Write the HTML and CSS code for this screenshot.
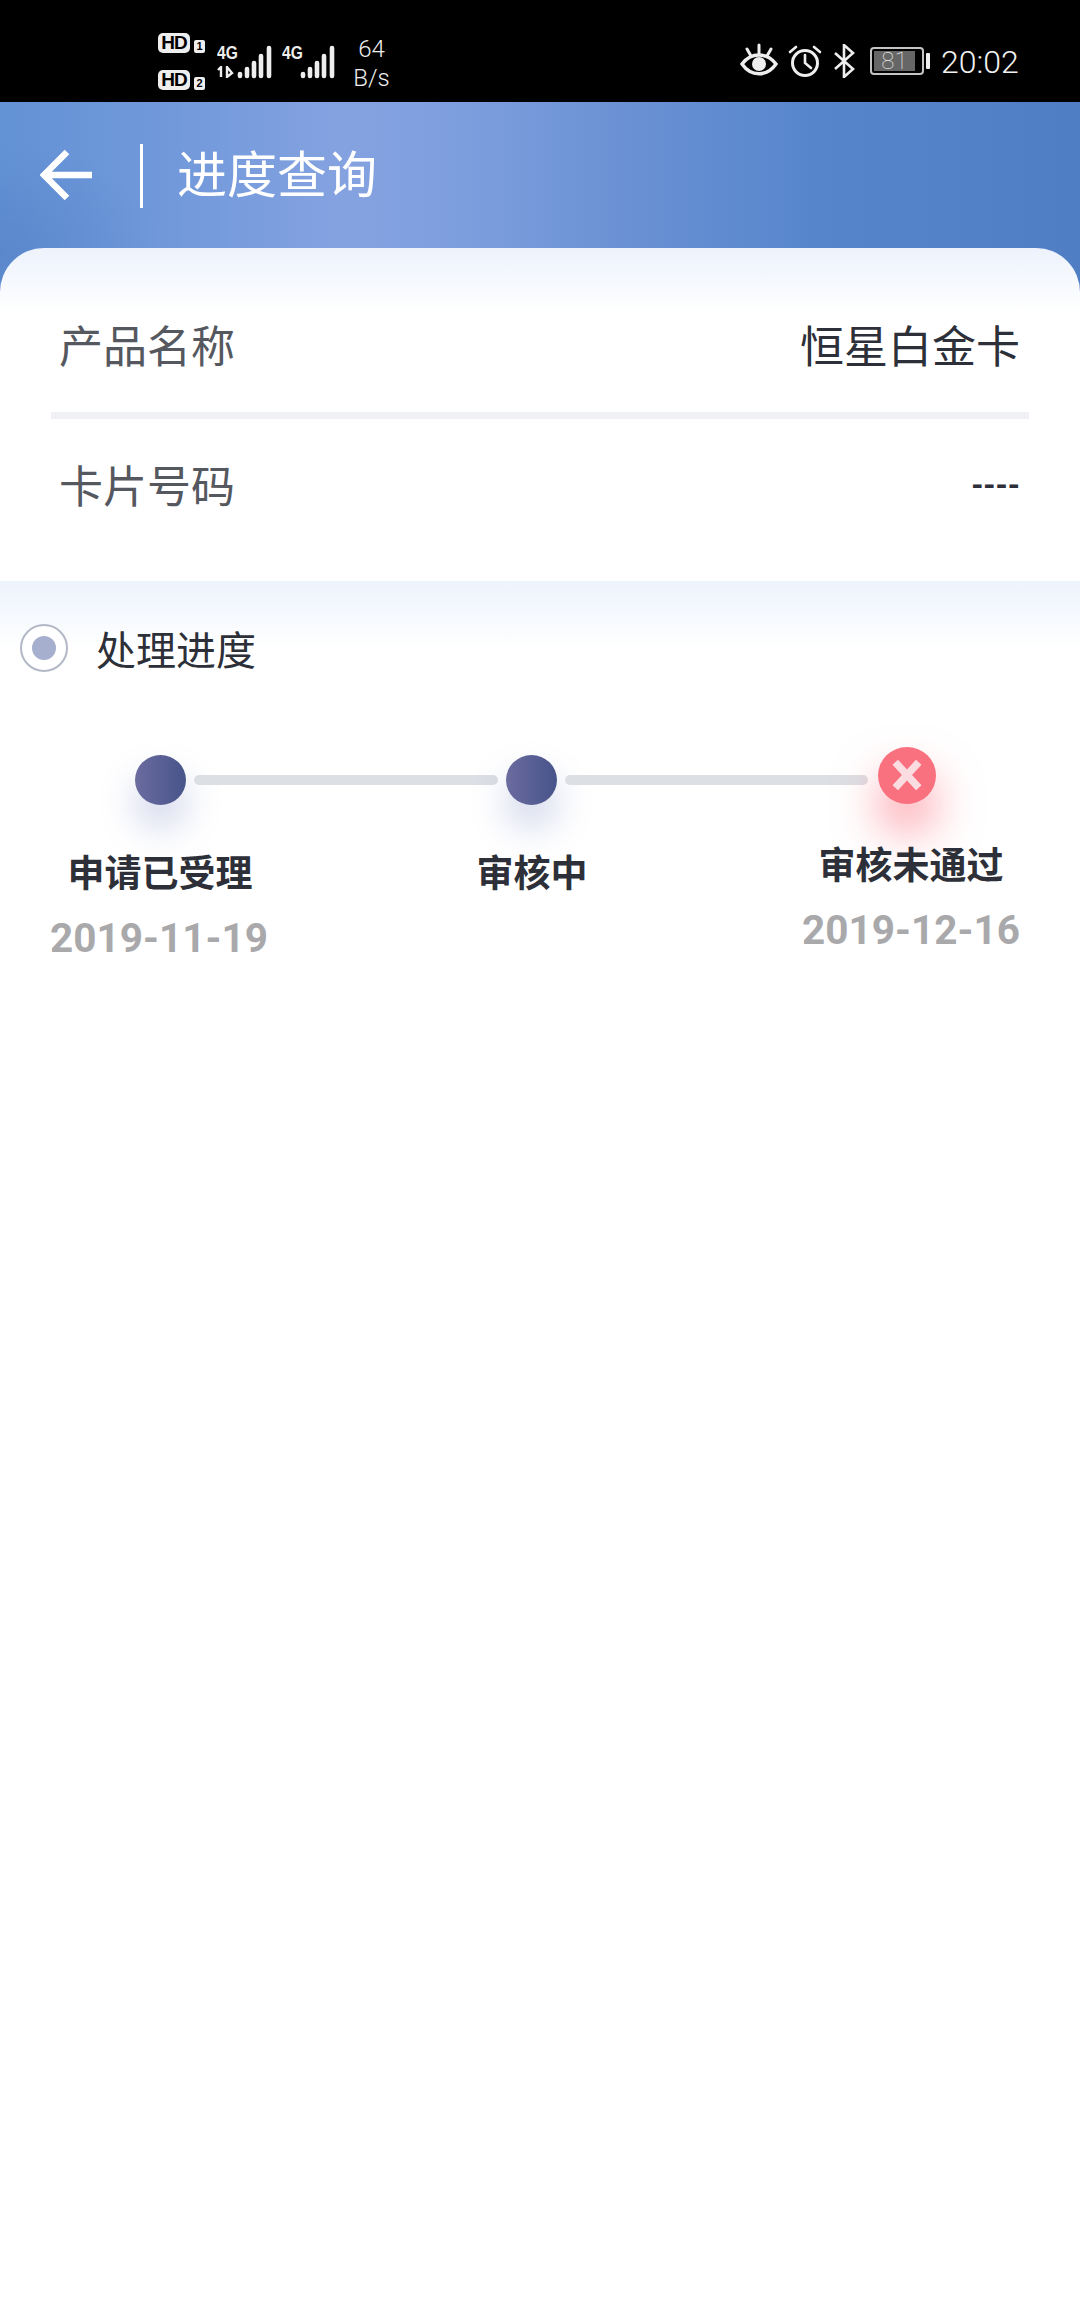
FILE: index.html
```html
<!DOCTYPE html>
<html lang="zh">
<head>
<meta charset="utf-8">
<title>进度查询</title>
<link rel="stylesheet" href="styles.css">
</head>
<body>
<div class="status">
  <div class="sims">
    <div class="sim"><span class="hd">HD</span><span class="simno">1</span></div>
    <div class="sim"><span class="hd">HD</span><span class="simno">2</span></div>
  </div>
  <div class="net net-a">
    <span class="g">4G</span>
    <svg class="arrows" width="17" height="12" viewBox="0 0 17 12"><path d="M4 11V1L1 4M10 1v10l5-4z" fill="none" stroke="#eee" stroke-width="2.4"/></svg>
    <svg class="bars" width="35" height="34" viewBox="0 0 35 34"><g stroke="#eee" stroke-width="4.6" stroke-linecap="round"><path d="M3 29v2M10 24v7M17 18v13M24 11v20M32 3v28"/></g></svg>
  </div>
  <div class="net net-b">
    <span class="g">4G</span>
    <svg class="bars" width="35" height="34" viewBox="0 0 35 34"><g stroke="#eee" stroke-width="4.6" stroke-linecap="round"><path d="M3 29v2M10 24v7M17 18v13M24 11v20M32 3v28"/></g></svg>
  </div>
  <div class="speed"><span>64</span><span>B/s</span></div>
  <div class="status-right">
    <svg class="eye" width="38" height="34" viewBox="0 0 38 34"><path d="M2 21c9-12 25-12 34 0-9 13-25 13-34 0z" fill="none" stroke="#eee" stroke-width="3.4"/><circle cx="19" cy="21" r="7" fill="#eee"/><path d="M19 2v8M7 6l4 7M31 6l-4 7" stroke="#eee" stroke-width="3" stroke-linecap="round"/></svg>
    <svg class="alarm" width="34" height="34" viewBox="0 0 34 34"><circle cx="17" cy="19" r="12.5" fill="none" stroke="#eee" stroke-width="3"/><path d="M17 11v8l6 5M2 8l6-5M32 8l-6-5" fill="none" stroke="#eee" stroke-width="2.6" stroke-linecap="round"/></svg>
    <svg class="bt" width="22" height="34" viewBox="0 0 22 34"><path d="M2 9l18 16-9 8V1l9 8L2 25" fill="none" stroke="#eee" stroke-width="2.6"/></svg>
    <div class="battery"><div class="cell"><div class="charge">81</div></div><i class="nub"></i></div>
    <span class="clock">20:02</span>
  </div>
</div>

<header class="topbar">
  <svg class="back" width="54" height="54" viewBox="0 0 54 54"><path d="M52 27H5M27 4L4 27l23 23" fill="none" stroke="#fff" stroke-width="6.5"/></svg>
  <i class="vline"></i>
  <h1 class="title">进度查询</h1>
</header>

<section class="card">
  <div class="row">
    <span class="label">产品名称</span>
    <span class="value">恒星白金卡</span>
  </div>
  <div class="row row-second">
    <span class="label">卡片号码</span>
    <span class="dashes">----</span>
  </div>
</section>

<section class="progress">
  <div class="heading">
    <span class="radio"><i></i></span>
    <h2>处理进度</h2>
  </div>
  <div class="track">
    <i class="dot"></i>
    <i class="line"></i>
    <i class="dot"></i>
    <i class="line"></i>
    <i class="dot dot-fail">
      <svg width="32" height="32" viewBox="0 0 30 30"><path d="M4 3l22 24M26 3L4 27" stroke="#fbdde1" stroke-width="7"/></svg>
    </i>
  </div>
  <div class="labels">
    <div class="step"><strong>申请已受理</strong><span>2019-11-19</span></div>
    <div class="step"><strong>审核中</strong></div>
    <div class="step step-fail"><strong>审核未通过</strong><span>2019-12-16</span></div>
  </div>
</section>
</body>
</html>
```

FILE: styles.css
```css
* { box-sizing: border-box; }
html, body { margin: 0; padding: 0; }
body {
  width: 1080px;
  height: 2310px;
  overflow: hidden;
  background: #fff;
  font-family: "Noto Sans CJK SC", Roboto, sans-serif;
  color: #2d3038;
}
h1, h2 { margin: 0; font-weight: 400; }
i { display: block; }

/* status bar */
.status {
  height: 102px;
  background: #000;
  color: #eee;
  display: flex;
  align-items: flex-start;
  padding: 0 60px 0 158px;
  font-family: Roboto, sans-serif;
}
.sims {
  width: 48px;
  margin-top: 33px;
  display: flex;
  flex-direction: column;
  gap: 17px;
}
.sim { display: flex; align-items: flex-end; gap: 4px; height: 20px; }
.hd {
  width: 32px;
  height: 20px;
  border-radius: 5px;
  background: #eee;
  color: #000;
  font: 700 19px/20px "Liberation Sans", sans-serif;
  text-align: center;
  letter-spacing: -1px;
}
.simno {
  width: 11px;
  height: 13px;
  border-radius: 2px;
  background: #eee;
  color: #000;
  font: 700 11px/13px "Liberation Sans", sans-serif;
  text-align: center;
}
.net { position: relative; height: 80px; }
.net-a { width: 65px; margin-left: 11px; }
.net-b { width: 53px; }
.g {
  position: absolute;
  left: 0;
  top: 43px;
  font: 700 19px/20px "Liberation Sans", sans-serif;
  transform: scaleX(.82);
  transform-origin: left;
}
.arrows { position: absolute; left: 0; top: 66px; }
.bars { position: absolute; left: 20px; top: 45px; }
.net-b .bars { left: 18px; }
.speed {
  width: 37px;
  margin: 35px 0 0 18px;
  display: flex;
  flex-direction: column;
  align-items: center;
  font-size: 24px;
  line-height: 29px;
  font-weight: 300;
}
.status-right {
  margin-left: auto;
  width: 280px;
  height: 102px;
  display: flex;
  align-items: flex-start;
  padding-top: 45px;
}
.eye { margin-left: 0; margin-top: -2px; }
.alarm { margin-left: 10px; margin-top: -1px; }
.bt { margin-left: 11px; margin-top: -1px; }
.battery { display: flex; align-items: center; margin-left: 15px; margin-top: 2px; }
.cell {
  width: 54px;
  height: 28px;
  border: 2px solid #c4c4c4;
  border-radius: 4px;
  padding: 2px;
}
.charge {
  width: 41px;
  height: 20px;
  background: #666;
  color: #e8e8e8;
  font: 100 24px/20px Roboto, sans-serif;
  text-align: center;
}
.nub { width: 4px; height: 16px; margin-left: 2px; background: #eee; border-radius: 1px; }
.clock {
  margin-left: 11px;
  margin-top: -2px;
  font-size: 32px;
  line-height: 38px;
  font-weight: 300;
  color: #f2f2f2;
}

/* title bar */
.topbar {
  height: 192px;
  padding: 46px 0 0 41px;
  display: flex;
  align-items: flex-start;
  color: #fff;
  background:
    radial-gradient(ellipse 160px 110px at 0 150px, rgba(82, 125, 195, .5), rgba(82, 125, 195, 0)),
    linear-gradient(90deg, #6392d5 0%, #6f98da 14%, #85a2e0 32%, #7d9edd 43%, #6a91d4 58%, #5685cc 76%, #4f7ec4 100%);
}
.back { margin-left: -1px; }
.vline { width: 3px; height: 64px; margin: -4px 0 0 46px; background: #fff; }
.title {
  margin: -14px 0 0 34px;
  font-size: 50px;
  line-height: 74px;
  font-weight: 400;
}

/* summary card */
.card {
  position: relative;
  height: 333px;
  margin-top: -46px;
  padding: 0 51px;
  border-radius: 44px 44px 0 0;
  background: linear-gradient(180deg, #edf2fc 0, #fff 66px);
}
.row {
  height: 171px;
  padding: 66px 10px 0 8px;
  display: flex;
  justify-content: space-between;
  align-items: flex-start;
  border-bottom: 7px solid #f0f1f4;
  font-size: 44px;
  line-height: 60px;
}
.row-second { height: 150px; padding-top: 35px; border-bottom: 0; }
.label { color: #55585f; font-weight: 400; }
.value { font-weight: 400; color: #2d3038; margin-right: -1px; }
.dashes {
  font: 700 31px/64px Roboto, sans-serif;
  margin-right: -1px;
  color: #2d3038;
}

/* progress */
.progress {
  padding-top: 43px;
  height: 500px;
  background: linear-gradient(180deg, #edf3fc 0, #fff 68px);
}
.heading { display: flex; align-items: center; padding-left: 20px; height: 48px; }
.radio {
  width: 48px;
  height: 48px;
  border: 2px solid #b2b8c6;
  border-radius: 50%;
  display: flex;
  align-items: center;
  justify-content: center;
  background: #fff;
}
.radio i { width: 24px; height: 24px; border-radius: 50%; background: #a6afcd; }
.heading h2 {
  margin-left: 28px;
  font-size: 40px;
  line-height: 56px;
  font-weight: 400;
  color: #2d3038;
}
.track {
  display: flex;
  align-items: center;
  gap: 8px;
  margin-top: 83px;
  padding-left: 135px;
}
.dot {
  flex: none;
  width: 51px;
  height: 50px;
  border-radius: 50%;
  background: linear-gradient(90deg, #6b6b9f, #47548a);
  box-shadow: 0 22px 36px rgba(110, 125, 190, .32);
}
.line { flex: none; width: 304px; height: 10px; border-radius: 5px; background: #dcdfe4; }
.line + .dot + .line { width: 303px; }
.dot-fail {
  width: 58px;
  height: 57px;
  margin-top: -10px;
  margin-left: 2px;
  display: flex;
  align-items: center;
  justify-content: center;
  background: #f9717f;
  box-shadow: 0 28px 46px rgba(250, 110, 125, .65);
}
.labels { display: flex; margin-top: 40px; padding-left: 20px; }
.step {
  width: 280px;
  display: flex;
  flex-direction: column;
  align-items: center;
  gap: 15px;
}
.step + .step { margin-left: 92px; }
.step strong {
  font-size: 37px;
  line-height: 52px;
  font-weight: 700;
  color: #2d3038;
}
.step span {
  font: 700 40.5px/52px Roboto, sans-serif;
  color: #a9a9ac;
  margin-right: 2px;
}
.step + .step.step-fail { margin-top: -8px; margin-left: 99px; }
.step-fail span { margin-right: 0; }
```
